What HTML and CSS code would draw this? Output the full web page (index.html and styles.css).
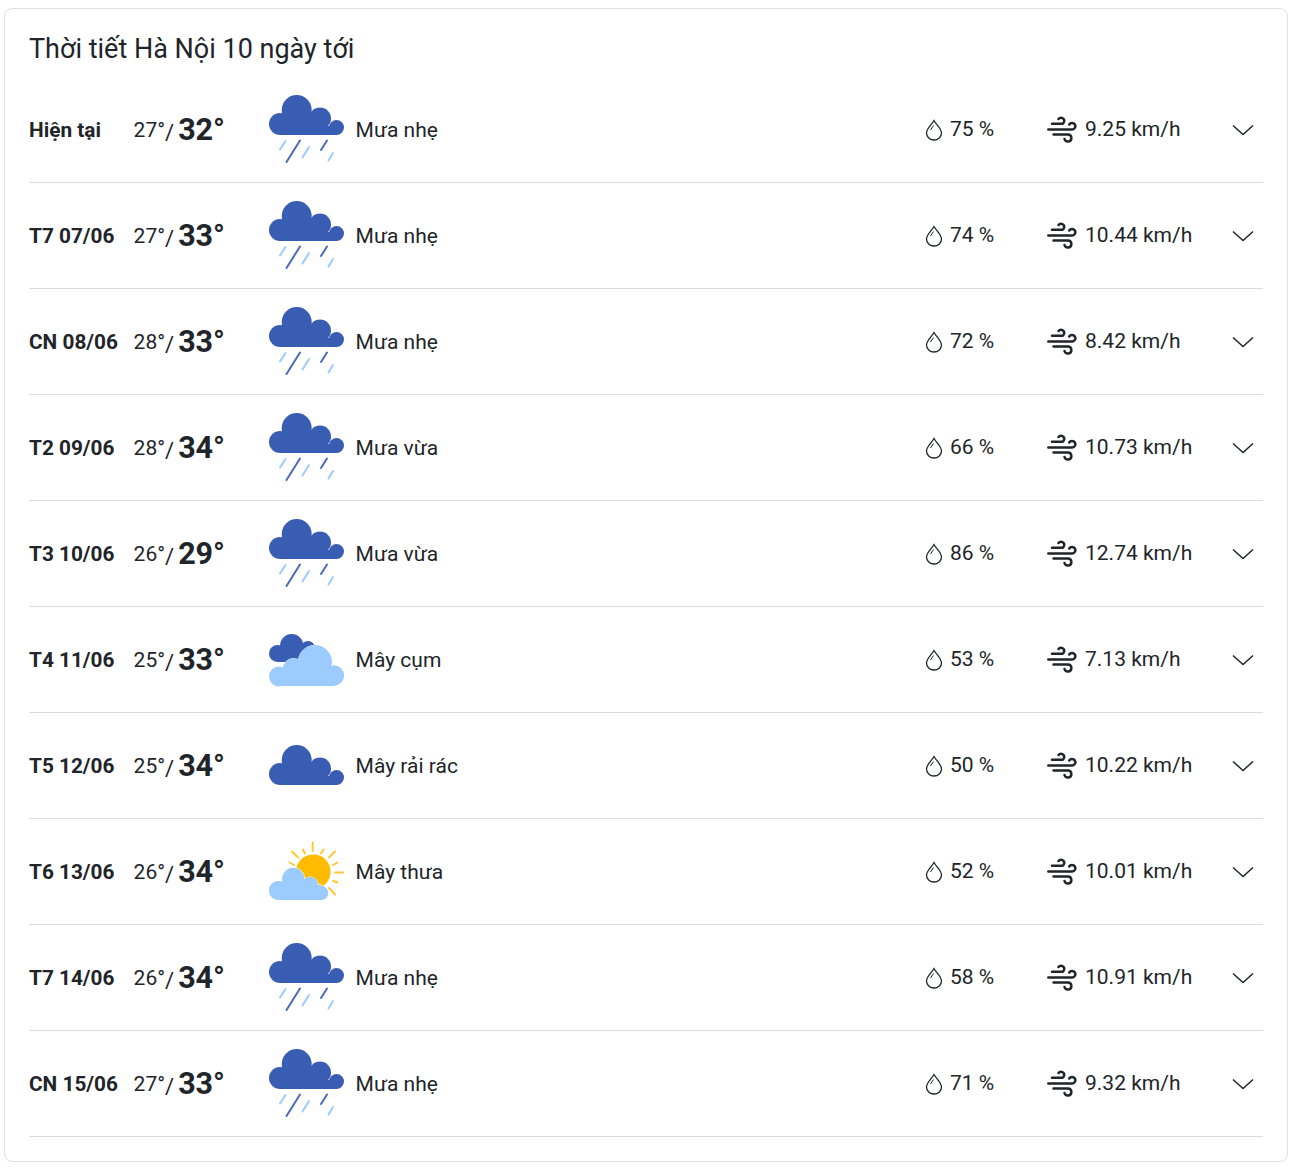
FILE: index.html
```html
<!DOCTYPE html>
<html lang="vi">
<head>
<meta charset="utf-8">
<title>Thời tiết Hà Nội 10 ngày tới</title>
<link rel="stylesheet" href="styles.css">
</head>
<body>
<svg class="defs" width="0" height="0" aria-hidden="true">
  <symbol id="i-cloud" viewBox="0 0 84 80">
    <g fill="#385db3">
      <circle cx="32.700" cy="20" r="15"/><circle cx="56" cy="28.500" r="11"/><circle cx="72.500" cy="37.500" r="7.500"/><circle cx="16" cy="34" r="11"/>
      <rect x="16" y="26" width="44" height="19"/><rect x="16" y="36" width="56.500" height="9"/>
    </g>
  </symbol>
  <symbol id="i-rain" viewBox="0 0 84 80">
    <use href="#i-cloud" width="84" height="80"/>
    <g stroke-width="2" stroke-linecap="round">
      <path d="M36 50.500 22.500 72M63 50.500 57 60" stroke="#4d69b8"/>
      <path d="M21.500 51 16 59.500M45 57 38.500 67.500M69 63 64.500 70.500" stroke="#9ccbff"/>
    </g>
  </symbol>
  <symbol id="i-scatter" viewBox="0 0 84 80">
    <use href="#i-cloud" y="14" width="84" height="80"/>
  </symbol>
  <symbol id="i-broken" viewBox="0 0 84 80">
    <g fill="#385db3">
      <circle cx="27.700" cy="25.700" r="11.700"/><circle cx="44" cy="28" r="7"/><circle cx="13.500" cy="33.500" r="8.500"/>
      <rect x="13.500" y="26" width="32" height="16"/>
    </g>
    <g fill="#9ccbff" stroke="#fff" stroke-width="1" paint-order="stroke">
      <circle cx="51" cy="42" r="16.700"/><circle cx="29.500" cy="49" r="10.500"/><circle cx="70" cy="55.500" r="10"/><circle cx="15" cy="56.500" r="10"/>
    </g>
    <g fill="#9ccbff"><circle cx="51" cy="42" r="16.700"/><circle cx="29.500" cy="49" r="10.500"/><circle cx="70" cy="55.500" r="10"/><circle cx="15" cy="56.500" r="9.500"/><rect x="15" y="48" width="55" height="18"/></g>
  </symbol>
  <symbol id="i-sun" viewBox="0 0 84 80">
    <circle cx="49.300" cy="39.700" r="17.300" fill="#ffbb00"/>
    <path stroke="#ffc933" stroke-width="2" stroke-linecap="round" fill="none" d="M48.700 10.500V19M28 19.500 34 25.500M71 19.500 65 25.500M39 17.500 41 21.500M59.500 17.500 57 21.500M25.500 30.500 30 33M73.500 30.500 69 33M71 40.500H79M73.500 50.500 69 49M71 62.500 65 56"/>
    <g fill="#9ccbff" stroke="#fff" stroke-width="1.200" paint-order="stroke">
      <circle cx="29.300" cy="47" r="11"/><circle cx="46" cy="53" r="8"/><circle cx="57" cy="61" r="7"/><circle cx="14.500" cy="58.500" r="9.500"/><rect x="14.500" y="53" width="42.500" height="15"/>
    </g>
    <g fill="#9ccbff">
      <circle cx="29.300" cy="47" r="11"/><circle cx="46" cy="53" r="8"/><circle cx="57" cy="61" r="7"/><circle cx="14.500" cy="58.500" r="9.500"/><rect x="14.500" y="53" width="42.500" height="15"/>
    </g>
  </symbol>
  <symbol id="i-drop" viewBox="0 0 18 22">
    <path d="M9 1.500C6.500 6 1.500 9.500 1.500 14a7.500 7 0 0 0 15 0C16.500 9.500 11.500 6 9 1.500Z" fill="none" stroke="#212529" stroke-width="1.300"/>
    <path d="M8.500 6.500 5.500 11" fill="none" stroke="#212529" stroke-width="1"/>
  </symbol>
  <symbol id="i-wind" viewBox="0 -1 30 28">
    <path d="M5 6.800H15.500A3.200 3.200 0 1 0 11.500 2M1.300 12.500H25.200A3.300 3.300 0 1 0 22.200 7.500M6.500 17.500H21A3.500 3.500 0 1 1 17.500 22" fill="none" stroke="#212529" stroke-width="2.500" stroke-linecap="round"/>
  </symbol>
  <symbol id="i-chev" viewBox="0 0 22 12">
    <path d="M1 1.500 11 10.500 21 1.500" fill="none" stroke="#212529" stroke-width="1.500"/>
  </symbol>
</svg>
<main class="card">
  <h2 class="title">Thời tiết Hà Nội 10 ngày tới</h2>
  <ul class="list">
    <li class="row"><span class="date">Hiện tại</span><span class="temp"><span class="low">27°</span><span class="sep">/</span><b class="high">32°</b></span><svg class="wx"><use href="#i-rain"/></svg><span class="desc">Mưa nhẹ</span><svg class="drop"><use href="#i-drop"/></svg><span class="hum">75 %</span><svg class="wind"><use href="#i-wind"/></svg><span class="speed">9.25 km/h</span><svg class="chev"><use href="#i-chev"/></svg></li>
    <li class="row"><span class="date">T7 07/06</span><span class="temp"><span class="low">27°</span><span class="sep">/</span><b class="high">33°</b></span><svg class="wx"><use href="#i-rain"/></svg><span class="desc">Mưa nhẹ</span><svg class="drop"><use href="#i-drop"/></svg><span class="hum">74 %</span><svg class="wind"><use href="#i-wind"/></svg><span class="speed">10.44 km/h</span><svg class="chev"><use href="#i-chev"/></svg></li>
    <li class="row"><span class="date">CN 08/06</span><span class="temp"><span class="low">28°</span><span class="sep">/</span><b class="high">33°</b></span><svg class="wx"><use href="#i-rain"/></svg><span class="desc">Mưa nhẹ</span><svg class="drop"><use href="#i-drop"/></svg><span class="hum">72 %</span><svg class="wind"><use href="#i-wind"/></svg><span class="speed">8.42 km/h</span><svg class="chev"><use href="#i-chev"/></svg></li>
    <li class="row"><span class="date">T2 09/06</span><span class="temp"><span class="low">28°</span><span class="sep">/</span><b class="high">34°</b></span><svg class="wx"><use href="#i-rain"/></svg><span class="desc">Mưa vừa</span><svg class="drop"><use href="#i-drop"/></svg><span class="hum">66 %</span><svg class="wind"><use href="#i-wind"/></svg><span class="speed">10.73 km/h</span><svg class="chev"><use href="#i-chev"/></svg></li>
    <li class="row"><span class="date">T3 10/06</span><span class="temp"><span class="low">26°</span><span class="sep">/</span><b class="high">29°</b></span><svg class="wx"><use href="#i-rain"/></svg><span class="desc">Mưa vừa</span><svg class="drop"><use href="#i-drop"/></svg><span class="hum">86 %</span><svg class="wind"><use href="#i-wind"/></svg><span class="speed">12.74 km/h</span><svg class="chev"><use href="#i-chev"/></svg></li>
    <li class="row"><span class="date">T4 11/06</span><span class="temp"><span class="low">25°</span><span class="sep">/</span><b class="high">33°</b></span><svg class="wx"><use href="#i-broken"/></svg><span class="desc">Mây cụm</span><svg class="drop"><use href="#i-drop"/></svg><span class="hum">53 %</span><svg class="wind"><use href="#i-wind"/></svg><span class="speed">7.13 km/h</span><svg class="chev"><use href="#i-chev"/></svg></li>
    <li class="row"><span class="date">T5 12/06</span><span class="temp"><span class="low">25°</span><span class="sep">/</span><b class="high">34°</b></span><svg class="wx"><use href="#i-scatter"/></svg><span class="desc">Mây rải rác</span><svg class="drop"><use href="#i-drop"/></svg><span class="hum">50 %</span><svg class="wind"><use href="#i-wind"/></svg><span class="speed">10.22 km/h</span><svg class="chev"><use href="#i-chev"/></svg></li>
    <li class="row"><span class="date">T6 13/06</span><span class="temp"><span class="low">26°</span><span class="sep">/</span><b class="high">34°</b></span><svg class="wx"><use href="#i-sun"/></svg><span class="desc">Mây thưa</span><svg class="drop"><use href="#i-drop"/></svg><span class="hum">52 %</span><svg class="wind"><use href="#i-wind"/></svg><span class="speed">10.01 km/h</span><svg class="chev"><use href="#i-chev"/></svg></li>
    <li class="row"><span class="date">T7 14/06</span><span class="temp"><span class="low">26°</span><span class="sep">/</span><b class="high">34°</b></span><svg class="wx"><use href="#i-rain"/></svg><span class="desc">Mưa nhẹ</span><svg class="drop"><use href="#i-drop"/></svg><span class="hum">58 %</span><svg class="wind"><use href="#i-wind"/></svg><span class="speed">10.91 km/h</span><svg class="chev"><use href="#i-chev"/></svg></li>
    <li class="row"><span class="date">CN 15/06</span><span class="temp"><span class="low">27°</span><span class="sep">/</span><b class="high">33°</b></span><svg class="wx"><use href="#i-rain"/></svg><span class="desc">Mưa nhẹ</span><svg class="drop"><use href="#i-drop"/></svg><span class="hum">71 %</span><svg class="wind"><use href="#i-wind"/></svg><span class="speed">9.32 km/h</span><svg class="chev"><use href="#i-chev"/></svg></li>
  </ul>
</main>
</body>
</html>
```
FILE: styles.css
```css
* { box-sizing: border-box; }
html, body { background: #fff; }
body {
  margin: 0;
  padding: 8px 14px 14px 4px;
  font-family: Roboto, "Noto Sans", sans-serif;
  color: #212529;
}
.defs { position: absolute; }
.card {
  border: 1px solid #e0e0e0;
  border-radius: 8px;
  padding: 0 24px 24px;
  height: 1154px;
}
.title {
  margin: 0;
  padding-top: 22px;
  height: 68px;
  font-size: 27px;
  line-height: 36px;
  font-weight: 400;
}
.list { list-style: none; margin: 0; padding: 0; }
.row {
  display: flex;
  align-items: center;
  height: 106px;
  border-bottom: 1px solid #dcdcdc;
  font-size: 21px;
}
.date { width: 104.600px; font-size: 20.800px; font-weight: 700; }
.temp { width: 130.400px; display: flex; align-items: center; }
.low { font-size: 21px; }
.sep { font-size: 22px; margin: 5px 4px 0 0; }
.high { font-size: 30.500px; font-weight: 700; }
.wx { width: 84px; height: 80px; flex: none; }
.wx use { width: 84px; height: 80px; }
.desc { margin-left: 7.600px; flex: 1; }
.drop { width: 18px; height: 22px; flex: none; margin-right: 7px; }
.drop use, .wind use, .chev use { width: 100%; height: 100%; }
.hum { width: 97px; margin-top: -1px; }
.wind { width: 30px; height: 28px; flex: none; margin-right: 8px; }
.speed { width: 147px; margin-top: -1px; }
.chev { width: 22px; height: 12px; flex: none; margin-right: 9px; }
```
